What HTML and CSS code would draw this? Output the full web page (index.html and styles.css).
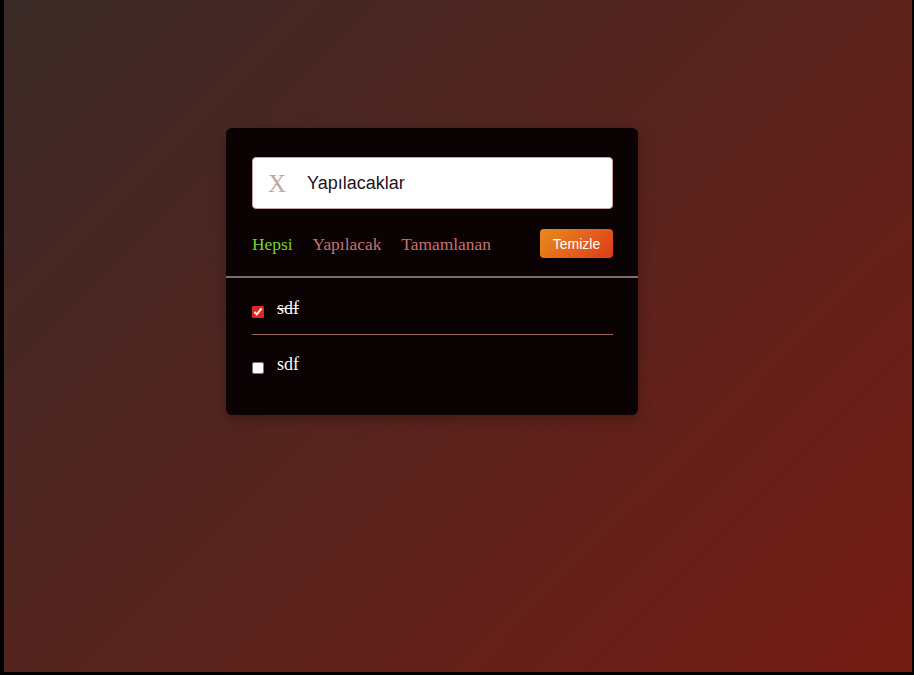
FILE: index.html
```html
<!DOCTYPE html>
<html lang="tr">
<head>
<meta charset="utf-8">
<title>Yapılacaklar</title>
<link rel="stylesheet" href="styles.css">
</head>
<body>
<div class="page">
  <div class="card">
    <div class="input-box">
      <span class="x">X</span>
      <span class="input-text">Yapılacaklar</span>
    </div>
    <div class="filters">
      <span class="filter active">Hepsi</span>
      <span class="filter">Yapılacak</span>
      <span class="filter">Tamamlanan</span>
      <button class="clear">Temizle</button>
    </div>
    <ul class="list">
      <li class="item done"><input type="checkbox" checked><span class="label">sdf</span></li>
      <li class="item"><input type="checkbox"><span class="label">sdf</span></li>
    </ul>
  </div>
</div>
</body>
</html>
```
FILE: styles.css
```css
html, body {
  margin: 0;
  padding: 0;
  background: #000;
  height: 675px;
  overflow: hidden;
}
.page {
  margin: 0 2px 0 4px;
  height: 672px;
  background: linear-gradient(135deg, #3a2a27 0%, #55241f 45%, #751c13 100%);
  padding: 128px 0 0 222px;
  box-sizing: border-box;
}
.card {
  width: 412px;
  height: 287px;
  box-sizing: border-box;
  background: #0a0203;
  border-radius: 6px;
  box-shadow: 0 4px 14px rgba(0,0,0,0.25);
  padding-top: 29px;
}
.input-box {
  margin: 0 25px 0 26px;
  height: 52px;
  box-sizing: border-box;
  background: #fff;
  border: 1px solid #c9a0a0;
  border-radius: 4px;
  display: flex;
  align-items: center;
  padding-left: 15px;
}
.x {
  font-family: "Liberation Serif", serif;
  font-size: 25px;
  color: #c5a6a6;
  width: 39px;
  line-height: 1;
}
.input-text {
  font-family: "Liberation Sans", Arial, sans-serif;
  font-size: 18px;
  color: #1e1418;
}
.filters {
  display: flex;
  align-items: center;
  gap: 20px;
  margin: 19px 25px 0 26px;
  height: 30px;
  padding-top: 1px;
}
.filter {
  font-family: "Liberation Serif", serif;
  font-size: 17.4px;
  color: #c87070;
}
.filter.active {
  color: #78d629;
}
.clear {
  margin-left: auto;
  width: 73px;
  height: 29px;
  margin-top: -1px;
  border: none;
  border-radius: 4px;
  background: linear-gradient(135deg, #e48d1e 0%, #e4601c 55%, #dc3a18 100%);
  color: #fff;
  font-family: "Liberation Sans", Arial, sans-serif;
  font-size: 14px;
  padding: 0;
}
.list {
  list-style: none;
  margin: 17px 0 0;
  padding: 0;
  border-top: 2px solid #7e6b6b;
}
.item {
  margin: 0 25px 0 26px;
  height: 56px;
  display: flex;
  align-items: center;
  box-sizing: border-box;
  padding-top: 4px;
}
.item + .item {
  border-top: 1px solid #9a6a62;
}
.item input {
  width: 12px;
  height: 12px;
  margin: 7px 13px 0 0;
  accent-color: #e0261a;
}
.label {
  font-family: "Liberation Serif", serif;
  font-size: 18px;
  color: #fff;
}
.item.done .label {
  text-decoration: line-through;
}
```
